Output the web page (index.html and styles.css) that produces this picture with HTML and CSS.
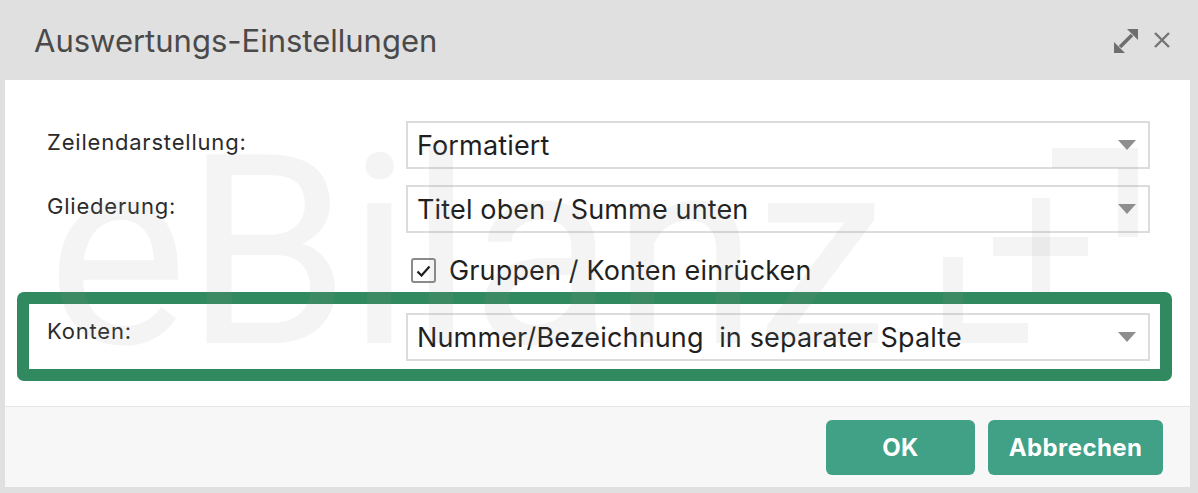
FILE: index.html
```html
<!DOCTYPE html>
<html lang="de">
<head>
    <meta charset="UTF-8">
    <meta name="viewport" content="width=device-width, initial-scale=1.0">
    <title>Auswertungs-Einstellungen</title>
    <link rel="stylesheet" href="styles.css">
</head>
<body>

    <div class="dialog">
        <!-- Title bar -->
        <div class="titlebar">
            <h1>Auswertungs-Einstellungen</h1>
            <div class="tools">
                <svg class="tool-expand" width="28" height="28" viewBox="0 0 28 28">
                    <line x1="8" y1="20" x2="20" y2="8" stroke="#6e6e6e" stroke-width="3.6"/>
                    <polygon points="26,2 26,13 15,2" fill="#6e6e6e"/>
                    <polygon points="2,26 2,15 13,26" fill="#6e6e6e"/>
                </svg>
                <svg class="tool-close" width="16" height="16" viewBox="0 0 16 16">
                    <path d="M1 1 L15 15 M15 1 L1 15" stroke="#747474" stroke-width="2.4"/>
                </svg>
            </div>
        </div>

        <div class="panel">
            <div class="content">
                <div class="row">
                    <div class="label">Zeilendarstellung:</div>
                    <div class="select">Formatiert<span class="caret"></span></div>
                </div>
                <div class="row row-gap">
                    <div class="label">Gliederung:</div>
                    <div class="select">Titel oben / Summe unten<span class="caret"></span></div>
                </div>
                <div class="row check-row">
                    <div></div>
                    <label class="check">
                        <span class="box">
                            <svg width="15" height="12" viewBox="0 0 15 12">
                                <path d="M1.5 6.5 L5.5 10.5 L13.5 1.5" fill="none" stroke="#1e1e1e" stroke-width="2.2"/>
                            </svg>
                        </span>
                        Gruppen / Konten einrücken
                    </label>
                </div>
                <!-- highlighted row -->
                <div class="highlight">
                    <div class="row">
                        <div class="label label-tight">Konten:</div>
                        <div class="select">Nummer/Bezeichnung&nbsp; in separater Spalte<span class="caret"></span></div>
                    </div>
                </div>
            </div>

            <div class="footer">
                <button class="btn btn-ok">OK</button>
                <button class="btn btn-cancel">Abbrechen</button>
            </div>
        </div>

        <!-- eBilanz+ watermark -->
        <svg class="watermark" width="1198" height="493" viewBox="0 0 1198 493">
            <g fill="rgba(150,150,150,0.1)">
                <text x="47" y="343" font-size="265" textLength="840" lengthAdjust="spacing">eBilanz</text>
                <rect x="993" y="237" width="95" height="19"/>
                <rect x="1032" y="198" width="18" height="94"/>
                <rect x="1052" y="148" width="86" height="20"/>
                <rect x="1118" y="168" width="20" height="69"/>
                <rect x="943" y="257" width="20" height="66"/>
                <rect x="943" y="323" width="85" height="20"/>
            </g>
        </svg>
    </div>

</body>
</html>
```

FILE: styles.css
```css
html, body { margin: 0; padding: 0; }
body {
    background: #e0e0e0;
    font-family: Inter, "Liberation Sans", sans-serif;
    width: 1198px;
    height: 493px;
    overflow: hidden;
}
.dialog { position: relative; height: 493px; }

/* Title bar */
.titlebar {
    height: 80px;
    display: flex;
    align-items: center;
    justify-content: space-between;
    padding: 0 28px 0 34px;
}
.titlebar h1 {
    margin: 0;
    font-size: 31px;
    font-weight: 400;
    color: #4a4a4a;
    letter-spacing: 0;
}
.tools { display: flex; align-items: center; gap: 14px; }
.tool-expand { margin-top: 2px; }

/* Body */
.panel { margin: 0 8px 5px 5px; background: #fff; }
.content { padding: 41px 40px 25px 42px; }
.row {
    display: grid;
    grid-template-columns: 359px 1fr;
    align-items: start;
}
.row-gap { margin-top: 16px; }
.label {
    font-size: 22px;
    letter-spacing: 0.8px;
    color: #2b2b2b;
    padding-top: 8px;
    line-height: 26px;
}
.label-tight { padding-top: 5px; }
.select {
    height: 48px;
    box-sizing: border-box;
    border: 2px solid #dcdcdc;
    padding: 0 12px 0 9px;
    display: flex;
    align-items: center;
    justify-content: space-between;
    font-size: 27px;
    letter-spacing: 0.15px;
    color: #1f1f1f;
    white-space: pre;
    background: #fff;
}
.caret {
    width: 0;
    height: 0;
    border-left: 9px solid transparent;
    border-right: 9px solid transparent;
    border-top: 10px solid #8e8e8e;
}

/* Checkbox */
.check-row { margin-top: 24px; height: 27px; }
.check {
    display: flex;
    align-items: center;
    gap: 13px;
    font-size: 27px;
    letter-spacing: 0.15px;
    color: #1f1f1f;
    padding-left: 5px;
    height: 27px;
}
.box {
    flex: none;
    width: 25px;
    height: 25px;
    box-sizing: border-box;
    border: 2px solid #8a8a8a;
    border-radius: 3px;
    display: flex;
    align-items: center;
    justify-content: center;
}

/* Green highlight frame */
.highlight {
    margin: 8px -22px 0 -30px;
    border: 12px solid #318a5f;
    border-radius: 7px;
    padding: 9px 10px 8px 18px;
}

/* Footer */
.footer {
    height: 81px;
    box-sizing: border-box;
    border-top: 1px solid #e6e6e6;
    background: #f7f7f7;
    display: flex;
    justify-content: flex-end;
    align-items: center;
    gap: 13px;
    padding: 0 27px;
}
.btn {
    height: 55px;
    border: none;
    border-radius: 6px;
    background: #40a187;
    color: #fff;
    font-family: Inter, "Liberation Sans", sans-serif;
    font-size: 24px;
    letter-spacing: 0.4px;
    font-weight: 700;
    cursor: pointer;
}
.btn-ok { width: 149px; }
.btn-cancel { width: 175px; }

.watermark {
    position: absolute;
    top: 0;
    left: 0;
    pointer-events: none;
    font-family: Roboto, "Liberation Sans", sans-serif;
    font-weight: 400;
}
```
